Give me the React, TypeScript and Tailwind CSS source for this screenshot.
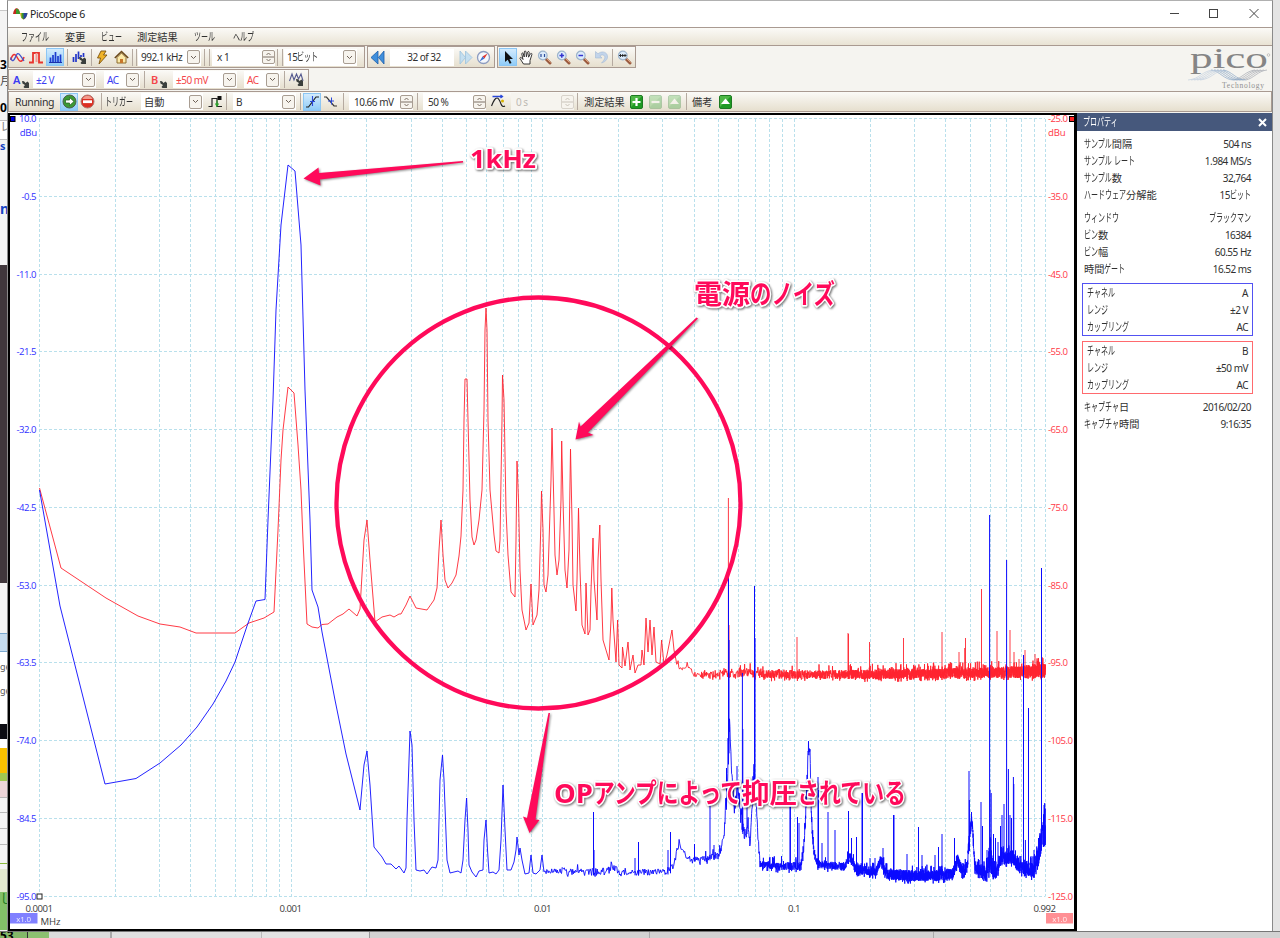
import type { ReactNode } from 'react';
import clsx from 'clsx';

const RUNS = /([\u3040-\u30ff]+|[\u0020-\u00ff]+)/;
const KANA = /[\u3040-\u30ff]/;
const LATIN = /[\u0020-\u00ff]/;

// UI text: kana runs are set condensed, latin runs a little tighter
function Jp({ children }: { children: string }) {
  return (
    <span className="whitespace-pre">
      {children.split(RUNS).filter(Boolean).map((run, i) => {
        if (KANA.test(run)) {
          return (
            <span
              key={i}
              className="inline-block origin-left scale-x-[0.61] text-[11.500px]"
              style={{ marginRight: `${-0.39 * run.length}em` }}
            >
              {run}
            </span>
          );
        }
        return (
          <span key={i} className={LATIN.test(run) ? 'text-[10px] tracking-[-0.5px]' : ''}>
            {run}
          </span>
        );
      })}
    </span>
  );
}

/* ---------- toolbar parts ---------- */

function Sep({ className }: { className?: string }) {
  return <div className={clsx('h-[17px] w-px shrink-0 bg-[#b5aaa0]', className)} />;
}

function Chevron() {
  return (
    <div className="mr-px flex h-[14px] w-[13px] shrink-0 items-center justify-center rounded-[2px] border border-[#a89d92] bg-[#f7f4ee]">
      <svg width="7" height="5" viewBox="0 0 7 5" fill="none" stroke="#6e6259">
        <path d="M1 1l2.5 2.5L6 1" />
      </svg>
    </div>
  );
}

function Select({ className, children }: { className?: string; children: string }) {
  return (
    <div className={clsx('flex h-[17px] shrink-0 items-center justify-between bg-white pl-[3px]', className)}>
      <Jp>{children}</Jp>
      <Chevron />
    </div>
  );
}

function Spin({ className, off, children }: { className?: string; off?: boolean; children: string }) {
  return (
    <div
      className={clsx(
        'flex h-[17px] shrink-0 items-center justify-between pl-[5px]',
        off ? 'bg-[#f6f4ef] text-[#bdb9b3]' : 'bg-white',
        className,
      )}
    >
      <Jp>{children}</Jp>
      <div
        className={clsx(
          'flex h-[14px] w-[13px] shrink-0 items-center justify-center rounded-[2px] border bg-[#f7f4ee]',
          off ? 'border-[#d8d3cb]' : 'border-[#a89d92]',
        )}
      >
        <svg width="11" height="12" viewBox="0 0 11 12" fill="none" stroke={off ? '#c9c3ba' : '#7d7167'}>
          <path d="M3.5 4l2-2 2 2M0 6h11M3.5 8l2 2 2-2" />
        </svg>
      </div>
    </div>
  );
}

function Ico({ className, children }: { className?: string; children: ReactNode }) {
  return (
    <svg className={clsx('shrink-0', className)} width="15" height="15" viewBox="0 0 15 15" fill="none">
      {children}
    </svg>
  );
}

function Active({ className, children }: { className?: string; children: ReactNode }) {
  return (
    <div
      className={clsx(
        'flex h-[18px] w-[18px] shrink-0 items-center justify-center border border-[#8cc6f4] bg-linear-to-b from-[#d3ebfd] to-[#8fccf8]',
        className,
      )}
    >
      {children}
    </div>
  );
}

const Wrench = () => (
  <path d="M7 7l2 .2L10.5 9l2-1.5L14 9v5H9.500l-1-1 1.500-2L7.500 9.500z" fill="#3b3f3c" />
);

function Magnifier({ className, mark }: { className?: string; mark: ReactNode }) {
  return (
    <Ico className={className}>
      <path d="M9 9l4 4" stroke="#9a5a3e" strokeWidth="3" strokeLinecap="round" />
      <path d="M9.500 8.500l4 4" stroke="#e0a27c" strokeWidth="1" />
      <circle cx="5.800" cy="5.500" r="4.300" fill="#dcebfa" stroke="#9db4cc" strokeWidth="1.200" />
      {mark}
    </Ico>
  );
}

function GreenButton({ className, off, kind }: { className?: string; off?: boolean; kind: 'plus' | 'minus' | 'up' }) {
  return (
    <svg className={clsx('shrink-0', off && 'opacity-30', className)} width="13" height="14" viewBox="0 0 13 14">
      <rect x="0.500" y="0.500" width="12" height="13" rx="1.500" fill="#1f9a24" stroke="#1d7a22" />
      <path d="M1 1h11L1 12z" fill="#6ccb5c" opacity="0.600" />
      {kind === 'plus' && <path d="M6.500 3v8M2.500 7h8" stroke="#fff" strokeWidth="2.200" />}
      {kind === 'minus' && <path d="M2.500 7h8" stroke="#fff" strokeWidth="2.200" />}
      {kind === 'up' && <path d="M6.500 3.500l4.500 5.500H2z" fill="#fff" />}
    </svg>
  );
}

const BAR = 'flex items-center border border-[#a99a91] bg-linear-to-b from-[#fbfaf7] to-[#e6dfce]';

function ViewToolbar() {
  return (
    <div className="flex h-[22px] gap-[2px]">
      <div className={clsx(BAR, 'w-[357px]')}>
        <Ico className="ml-[1px]">
          <path d="M0.500 10C3 3 5 3 7.500 8s5 4 6.500-1" stroke="#e33" strokeWidth="1.500" />
          <path d="M0.500 7.500C3 14 4.500 9 6.500 5s4 1 7.500 6" stroke="#45c" strokeWidth="1.300" />
        </Ico>
        <Ico className="ml-[4px]">
          <path d="M0 12.500h4V3h6v9.500h4" stroke="#e8352e" strokeWidth="1.800" />
          <path d="M7.500 3v9" stroke="#f29b96" strokeWidth="2" />
        </Ico>
        <Active className="ml-[2px]">
          <Ico>
            <path d="M1 12.500h13" stroke="#1b2fa8" />
            <path d="M2.500 12V7.500M5 12V5M7.500 12V2M10 12V6M12.500 12V4.500" stroke="#1d3ccf" strokeWidth="1.700" />
          </Ico>
        </Active>
        <Sep className="ml-[3px]" />
        <Ico className="ml-[4px]">
          <path d="M1.500 12V7M4 12V4M6.500 9V1.500M9 7V5M11.500 7V3" stroke="#2336c8" strokeWidth="1.700" />
          <Wrench />
        </Ico>
        <Sep className="ml-[4px]" />
        <Ico className="ml-[3px]">
          <path d="M6 1h5L8.500 5H12L4 14l1.500-6H2.500z" fill="#f0b429" stroke="#7c5210" strokeWidth="0.900" />
        </Ico>
        <Ico className="ml-[4px]">
          <path d="M3 7.500V13h9V7.500L7.500 3z" fill="#fbe9a8" stroke="#8b6a2c" />
          <path d="M0.800 8L7.500 1.500 14.200 8" stroke="#6c4a1b" strokeWidth="1.600" />
          <path d="M6 13V9h3v4" fill="#c8762b" />
        </Ico>
        <Sep className="ml-[3px]" />
        <Sep className="ml-[3px]" />
        <Select className="ml-[1px] w-[63px]">992.1 kHz</Select>
        <Sep className="ml-[3px]" />
        <Sep className="ml-[4px]" />
        <Spin className="ml-[2px] w-[63px]">x 1</Spin>
        <Sep className="ml-[2px]" />
        <Sep className="ml-[4px]" />
        <Select className="ml-[1px] w-[73px]">15ビット</Select>
      </div>

      <div className={clsx(BAR, 'w-[128px]')}>
        <Ico className="ml-[2px]">
          <path d="M8 1v13L1 7.500zM14 1v13L8.500 7.500z" fill="#3f8fdc" stroke="#1c5ea8" strokeWidth="0.800" />
        </Ico>
        <div className="ml-[5px] flex h-[17px] w-[64px] items-center justify-center bg-white pl-1">
          <Jp>32 of 32</Jp>
        </div>
        <Ico className="ml-[4px]">
          <path d="M2 1v13l5.500-6.500zM7.500 1v13L14 7.500z" fill="#c5dff0" stroke="#9cc2dc" strokeWidth="0.800" />
        </Ico>
        <Ico className="ml-[3px]">
          <circle cx="7.500" cy="7.500" r="6" fill="#f4f7fc" stroke="#8d9cc0" strokeWidth="1.300" />
          <path d="M11.500 3.500L8.500 8.500 6.500 6.500z" fill="#e0342b" />
          <path d="M3.500 11.500l3-5 2 2z" fill="#3b6fd0" />
        </Ico>
      </div>

      <div className={clsx(BAR, 'w-[139px]')}>
        <Active className="ml-px">
          <Ico>
            <path d="M4 1l8 8H8.500l2 4-1.800.8-2-4L4 12z" fill="#111" />
          </Ico>
        </Active>
        <Ico className="ml-[2px]">
          <path
            d="M4.500 14L1 8.500c-.5-1 1-1.500 1.800-.5L4 9.500 2.800 4c-.2-1.200 1.200-1.500 1.500-.3L5.200 7 5.300 2c0-1.300 1.600-1.300 1.700 0l.4 4.800L8.600 2.200c.3-1.200 1.800-.8 1.600.4L9.500 7.200l1.900-3.400c.6-1 1.900-.3 1.500.7L11 10.500V14z"
            fill="#fff"
            stroke="#222"
            strokeWidth="0.900"
          />
        </Ico>
        <Magnifier className="ml-[3px]" mark={<path d="M4 4v3M7.500 4v3" stroke="#2b4c9c" strokeWidth="1.200" />} />
        <Magnifier className="ml-[4px]" mark={<path d="M3.500 5.500h4.600M5.800 3.200v4.600" stroke="#3434d0" strokeWidth="1.500" />} />
        <Magnifier className="ml-[4px]" mark={<path d="M3.500 5.500h4.600" stroke="#3434d0" strokeWidth="1.500" />} />
        <Ico className="ml-[4px]">
          <path d="M1.500 1.500V8H8L5.800 5.800C9 3.500 12 6 10.500 9c-.6 1.500-1.500 2.500-3 4 5-1.500 7-5 5.500-8.500C11.500 1.500 7 1 4 3.800z" fill="#c2d4ea" stroke="#a3b8d4" strokeWidth="0.600" />
        </Ico>
        <Sep className="ml-[3px]" />
        <Magnifier
          className="ml-[4px]"
          mark={<path d="M2 5.500h7.500M3.500 4v3M5.700 4v3M8 4v3" stroke="#222" strokeWidth="0.900" />}
        />
      </div>
    </div>
  );
}

function ChannelToolbar() {
  return (
    <div className={clsx(BAR, 'mt-px h-[21px] w-[301px] text-[#3c3cf2]')}>
      <span className="ml-[4px] w-[8px] text-[11px] font-semibold">A</span>
      <Ico className="-ml-[6px] mt-[3px]">
        <Wrench />
      </Ico>
      <Select className="ml-[3px] w-[63px]">±2 V</Select>
      <Select className="ml-[8px] w-[36px]">AC</Select>
      <Sep className="ml-[4px]" />
      <span className="ml-[6px] w-[8px] text-[11px] font-semibold text-[#f4464a]">B</span>
      <Ico className="-ml-[6px] mt-[3px]">
        <Wrench />
      </Ico>
      <Select className="ml-[5px] w-[64px] text-[#f4464a]">±50 mV</Select>
      <Select className="ml-[7px] w-[36px] text-[#f4464a]">AC</Select>
      <Sep className="ml-[4px]" />
      <Ico className="ml-[4px]">
        <path d="M0.500 9L3 2l2 6 2.500-6 2 5L12 2l2 7" stroke="#555a90" strokeWidth="1.100" />
        <Wrench />
      </Ico>
    </div>
  );
}

function TriggerToolbar() {
  return (
    <div className={clsx(BAR, 'h-[21px] w-full')}>
      <span className="ml-[6px] w-[44px] text-[10.500px] tracking-[-0.35px]">Running</span>
      <Active className="ml-[1px]">
        <Ico>
          <circle cx="7.500" cy="7.500" r="6.500" fill="#3c9a35" stroke="#4b5e4a" />
          <path d="M3.500 6h4V3.500l4.500 4-4.500 4V9h-4z" fill="#fff" stroke="#205b1d" strokeWidth="0.700" />
        </Ico>
      </Active>
      <Ico className="ml-[2px]">
        <circle cx="7.500" cy="7.500" r="6.500" fill="#dc2f22" stroke="#b0766f" />
        <path d="M2.500 5a5.500 5.500 0 0 1 10 0z" fill="#f39a8c" />
        <path d="M3 7.700h9" stroke="#fff" strokeWidth="2.800" />
      </Ico>
      <Sep className="ml-[6px]" />
      <span className="ml-[3px] w-[33px]">
        <Jp>トリガー</Jp>
      </span>
      <Select className="ml-[3px] w-[62px]">自動</Select>
      <Ico className="ml-[5px]">
        <path d="M0.500 12.500H4V4.500h5v8h5" stroke="#222" strokeWidth="1.200" />
        <path d="M9.500 2h4v4h-4z" fill="#111" />
        <path d="M9 6.500v5M7.500 9.500L9 12l1.500-2.500" stroke="#2aa52a" strokeWidth="1.200" />
      </Ico>
      <Sep className="ml-[3px]" />
      <Select className="ml-[6px] w-[63px]">B</Select>
      <Sep className="ml-[4px]" />
      <Active className="ml-[2px]">
        <Ico>
          <path d="M1 13h2.500L11 3h3" stroke="#222" strokeWidth="1.200" />
          <path d="M7.500 2v10M5 7.500h5" stroke="#2a48d8" strokeWidth="1.100" />
        </Ico>
      </Active>
      <Ico className="ml-[2px]">
        <path d="M1 3h2.500L11 12h3" stroke="#333" strokeWidth="1.200" />
        <path d="M8.500 3.500v7M5 7h6" stroke="#2a48d8" strokeWidth="1" />
      </Ico>
      <Sep className="ml-[5px]" />
      <Spin className="ml-[5px] w-[64px]">10.66 mV</Spin>
      <Sep className="ml-[4px]" />
      <Spin className="ml-[5px] w-[63px]">50 %</Spin>
      <Ico className="ml-[5px]">
        <path d="M0.500 12C3 6 4 4 6 4s3 3.500 4 6 2 3 4 2" stroke="#222" strokeWidth="1.200" />
        <path d="M1.500 2.500h10M9.500 1l2 1.500-2 1.500" stroke="#2a48d8" strokeWidth="1.300" />
        <circle cx="11.500" cy="7" r="1.500" fill="#d8b400" />
      </Ico>
      <Spin off className="ml-[5px] w-[63px]">0 s</Spin>
      <Sep className="ml-[3px]" />
      <span className="ml-[6px] w-[42px]">測定結果</span>
      <GreenButton className="ml-[4px]" kind="plus" />
      <GreenButton className="ml-[6px]" kind="minus" off />
      <GreenButton className="ml-[6px]" kind="up" off />
      <Sep className="ml-[5px]" />
      <span className="ml-[5px] w-[22px]">備考</span>
      <GreenButton className="ml-[5px]" kind="up" />
    </div>
  );
}

function PicoLogo() {
  return (
    <svg width="86" height="45" viewBox="0 0 86 45">
      <g fill="none" strokeWidth="0.700">
        {[0, 3, 6, 9, 12].map((d) => (
          <g key={d}>
            <path d={`M${2 + d} 34C${14 + d} 33 ${16 + d} 25 ${27 + d} 24`} stroke="#c3d0e0" />
            <path d={`M${25 + d} 24C${34 + d} 25 ${38 + d} 34 ${48 + d} 34`} stroke="#8aa6c6" />
            <path d={`M${48 + d} 34C${56 + d} 32 ${60 + d} 25 ${69 + d} 24`} stroke="#a3a8b0" />
          </g>
        ))}
      </g>
      <text x="4" y="22" fontFamily="'Liberation Serif', serif" fontSize="29" textLength="78" lengthAdjust="spacingAndGlyphs" fill="#858585">
        pico
      </text>
      <circle cx="82.500" cy="9" r="1.300" fill="none" stroke="#999" strokeWidth="0.500" />
      <text x="36" y="41.500" fontFamily="'Liberation Serif', serif" fontSize="7.500" textLength="42" fill="#8f8f8f">
        Technology
      </text>
    </svg>
  );
}

/* ---------- spectrum chart ---------- */

const X0 = 39.5;
const DECADE = 251.6;
const Y0 = 119;
const STEP = 77.75;

type Pt = [number, number];

const RED: Pt[] = [
  [39.5, 488], [50, 527], [61, 568], [106, 598], [138, 616], [160, 624], [180, 627], [196, 633], [235, 633], [249, 623],
  [264, 618], [274, 612], [278, 530], [281, 460], [283, 430], [288, 387], [294, 393], [298, 445], [301, 490], [303, 540],
  [307, 624], [312, 627], [318, 628], [322, 624.5], [328, 624], [337, 617], [343, 614], [349, 609], [357, 616], [360, 609],
  [364, 540], [367, 520], [370, 560], [375, 622], [382, 617], [390, 615], [394, 617], [399, 614], [401, 614], [406, 605],
  [410, 596], [416, 608], [427, 610], [434, 600], [437, 588], [439, 550], [441, 520], [443, 555], [445, 580], [448, 588],
  [452, 583], [456, 575], [459, 556], [461, 536], [463, 490], [464, 420], [465, 379], [467, 379], [468, 420], [470, 500],
  [472, 537], [474, 545], [476, 540], [479, 520], [482, 490], [484, 410], [485, 330], [486, 308], [487, 330], [488, 420],
  [490, 490], [494, 535], [496, 551], [499, 553], [500, 540], [502, 420], [502.5, 375], [504, 400], [506, 510], [508, 555],
  [511, 592], [515, 597], [516, 540], [517, 461], [518.5, 500], [520, 570], [522, 610], [526, 630], [529, 623], [531, 584],
  [533, 625], [537, 615], [539, 590], [541, 520], [541.5, 491], [543, 530], [544, 585], [546, 592], [548, 575], [551, 480],
  [552, 428], [553.5, 490], [555, 555], [557, 575], [559, 560], [561, 500], [561.7, 441], [563, 500], [565, 570], [567, 588],
  [569, 550], [570.5, 449], [572, 520], [573, 585], [576, 611], [577, 580], [578.5, 508], [580, 570], [582, 625], [585, 634],
  [586, 583], [588, 635], [590, 630], [591, 590], [593, 538], [594, 580], [597, 620], [598, 560], [599.8, 525], [601, 580],
  [603, 640], [606, 650], [609, 660], [611, 620], [611.8, 588], [613, 620], [616, 662], [617.6, 620], [619, 665], [622, 668],
  [622.5, 647], [625, 666], [628, 642], [630, 670], [633, 655], [635, 673], [638, 665], [641, 665], [642, 650], [644, 665],
  [646, 618], [648, 652], [650, 620], [652, 655], [654, 627], [656, 662], [660, 664], [661.6, 640], [664, 665], [667, 655],
  [670, 640], [672, 630], [674, 650], [676, 660],
];

const BLUE: Pt[] = [
  [39.5, 490], [60, 606], [105, 784], [136, 778.5], [160, 763], [181, 745], [197, 727], [213, 704], [226, 681], [235, 662],
  [247, 626], [256, 601], [265, 599.5], [268, 520], [273, 400], [276, 310], [281, 225], [288, 165], [295, 171], [301, 245],
  [305, 390], [310, 520], [312, 590], [318, 607], [322, 632], [335, 700], [346, 754], [360, 810], [364, 765], [367, 751],
  [370, 785], [374, 847], [382, 857], [386, 864], [391, 864], [396, 869], [399, 866], [404, 873], [406, 868], [407, 820],
  [410, 731], [412, 745], [414, 820], [416, 870], [420, 871], [424, 870], [427, 874], [432, 867], [436, 868], [438, 860],
  [440, 780], [442.5, 755], [444, 780], [447, 860], [450, 873], [454, 872], [458, 871], [461, 873], [463, 860], [465, 820],
  [466.6, 798], [468, 830], [469, 865], [472, 872], [476, 877], [479, 871], [483, 870], [484, 840], [486, 820], [487.5, 850],
  [489, 873], [493, 872], [496, 874], [499, 870], [501, 840], [503, 785], [505, 830], [507, 870], [511, 870], [514, 862],
  [516, 850], [517, 837], [519, 855], [520, 848], [522, 860], [525, 874], [529, 873], [531, 855], [533, 873], [536, 874],
  [540, 870], [542, 855], [544, 872],
];

// noise floor envelopes: [x, top, bottom]
type Env = [number, number, number];

const RED_BAND: Env[] = [
  [676, 659, 663], [679, 666, 670], [690, 665, 670], [695, 672, 678], [710, 671, 678], [725, 669, 677], [735, 671, 679],
  [746, 668, 676], [755, 670, 678], [800, 670, 679], [850, 670, 679], [900, 669, 679], [950, 668, 678], [1000, 667, 678],
  [1015, 666, 678], [1030, 665, 678], [1045.5, 662, 678],
];

const BLUE_BAND: Env[] = [
  [544, 869, 875], [562, 867, 875], [580, 869, 876], [600, 868, 875], [613, 864, 871], [622, 869, 875], [665, 869, 876],
  [673, 863, 872], [677, 848, 854], [680, 843, 846], [684, 850, 856], [688, 856, 861], [700, 856, 862], [712, 854, 860],
  [720, 849, 857], [724, 832, 842], [727, 780, 800], [728.5, 700, 760], [730, 725, 740], [732, 770, 790], [734, 800, 812],
  [738, 785, 800], [741, 800, 825], [744, 825, 840], [748, 815, 832], [750, 838, 848], [752, 800, 812], [754, 762, 775],
  [756, 790, 805], [758, 830, 842], [760, 861, 868], [780, 862, 870], [801, 862, 870], [804, 838, 850], [807, 780, 800],
  [808, 747, 755], [810, 747, 755], [811.5, 810, 830], [814, 848, 858], [818, 860, 868], [845, 862, 871], [850, 852, 861],
  [856, 864, 874], [876, 868, 876], [881, 856, 864], [886, 869, 879], [905, 870, 881], [935, 870, 881], [953, 868, 879],
  [958, 854, 866], [963, 868, 879], [967, 860, 874], [970, 825, 840], [972, 813, 822], [975, 864, 874], [979, 862, 876],
  [984, 866, 881], [988, 862, 882], [990, 830, 870], [993, 866, 879], [997, 866, 878], [1001, 852, 864], [1013, 850, 864],
  [1018, 862, 872], [1034, 862, 878], [1038, 845, 867], [1041, 825, 852], [1043, 815, 847], [1045.5, 803, 846],
];

const RED_SPIKES: Pt[] = [
  [728.4, 498], [729, 625], [797, 637], [848, 633], [848.5, 634], [869.5, 642], [903.5, 638], [942, 632], [959, 652],
  [965.5, 638], [964.7, 648], [981.5, 589], [997, 631], [1010, 630], [1014, 652], [1025, 650], [1035, 654], [1019, 659],
];

const BLUE_SPIKES: Pt[] = [
  [593.5, 812], [594, 850], [638.5, 842], [635, 858], [670.5, 832], [668, 850], [694.5, 844], [710, 803], [714, 845],
  [726.5, 768], [728.5, 577], [729, 640], [737, 766], [742.4, 673], [742.8, 729], [747, 800], [754.5, 586], [755, 638],
  [790, 800], [790.4, 800], [797.5, 817], [799, 823], [770, 857], [818, 777], [818.5, 790], [822, 843], [828, 812],
  [835, 830], [848.5, 811], [851.5, 838], [856.5, 837], [862, 793], [862.5, 793], [870, 858], [875, 858], [883, 848],
  [893.5, 815], [894, 815], [907, 854], [918.5, 827], [922, 855], [935, 855], [938.5, 847], [942, 834], [954.5, 838],
  [969, 771], [969.4, 800], [971.5, 812], [981, 802], [982.5, 826], [987, 850], [989.6, 515], [990, 790], [991.2, 793],
  [993.5, 834], [995.5, 838], [998, 842], [1000.5, 826], [1002, 815], [1004, 804], [1006.6, 560], [1008.4, 769],
  [1010, 815], [1011.5, 818], [1013.4, 777], [1013.8, 784], [1017, 856], [1021, 856], [1023.5, 655], [1025.4, 840],
  [1028.5, 708], [1031, 856], [1034, 850], [1041.5, 568], [1044, 805],
];

function rng(seed: number) {
  let s = seed;
  return () => {
    s = (s * 1664525 + 1013904223) % 4294967296;
    return s / 4294967296;
  };
}

function limits(env: Env[], x: number): Pt {
  let i = 0;
  while (i < env.length - 2 && env[i + 1][0] < x) i++;
  const [xa, ta, ba] = env[i];
  const [xb, tb, bb] = env[i + 1];
  const k = (x - xa) / (xb - xa);
  return [ta + (tb - ta) * k, ba + (bb - ba) * k];
}

function bandPoints(env: Env[], seed: number): Pt[] {
  const rand = rng(seed);
  const out: Pt[] = [];
  const end = env[env.length - 1][0];
  let x = env[0][0];
  while (x < end) {
    const [top, bottom] = limits(env, x);
    let y = top + (bottom - top) * rand();
    if (rand() > 0.96) y = top - rand() * 6;
    else if (rand() > 0.96) y = bottom + rand() * 3;
    out.push([x, y]);
    // bins get denser towards the right of a log axis
    x += x < 700 ? 0.7 : x < 760 ? 0.35 : x < 850 ? 0.18 : 0.1;
  }
  return out;
}

const toStr = (pts: Pt[]) => pts.map(([x, y]) => `${x.toFixed(1)},${y.toFixed(1)}`).join(' ');

const redLine = toStr(RED);
const blueLine = toStr(BLUE);
const redBand = toStr(bandPoints(RED_BAND, 7));
const blueBand = toStr(bandPoints(BLUE_BAND, 21));
const spikes = (pts: Pt[], env: Env[]) => pts.map(([x, y]) => `M${x} ${y}V${limits(env, x)[1].toFixed(1)}`).join('');

const gridX = [0, 1, 2, 3]
  .flatMap((d) => [1, 2, 3, 4, 5, 6, 7, 8, 9].map((m) => X0 + DECADE * (d + Math.log10(m))))
  .concat(X0 + DECADE * (3 + Math.log10(9.92)));
const rows = Array.from({ length: 11 }, (_, i) => i);

const X_LABELS: [number, string][] = [
  [39, '0.0001'], [290.5, '0.001'], [542.5, '0.01'], [794, '0.1'], [1044.5, '0.992'],
];

function Chart() {
  return (
    <svg
      width="1064"
      height="814"
      viewBox="10 115 1064 814"
      fill="none"
      fontFamily="'Open Sans', 'Noto Sans', sans-serif"
      fontSize="9.600"
      letterSpacing="-0.500"
    >
      <g stroke="#b9e0ec" strokeDasharray="3 2">
        {gridX.map((x) => (
          <path key={x} d={`M${Math.floor(x) + 0.5} 119V896.5`} />
        ))}
        {rows.map((r) => (
          <path key={r} d={`M39 ${Math.floor(Y0 + r * STEP - 0.5) + 0.5}H1045`} />
        ))}
      </g>

      <g fill="#3030ff" textAnchor="end">
        {rows.map((r) => (
          <text key={r} x="36" y={122 + r * STEP}>{(10 - r * 10.5).toFixed(1)}</text>
        ))}
        <text x="37" y="136" letterSpacing="-0.200">dBu</text>
      </g>
      <g fill="#ff3846">
        {rows.map((r) => (
          <text key={r} x="1048" y={122 + r * STEP}>{(-25 - r * 10).toFixed(1)}</text>
        ))}
        <text x="1048" y="136" letterSpacing="-0.200">dBu</text>
      </g>
      <g fill="#3a3a3a" textAnchor="middle">
        {X_LABELS.map(([x, label]) => (
          <text key={label} x={x} y="912">{label}</text>
        ))}
        <text x="50.500" y="925" letterSpacing="-0.100">MHz</text>
      </g>

      <g stroke="#ff2430" strokeWidth="0.900">
        <polyline points={redLine} />
        <polyline points={redBand} />
        <path d={spikes(RED_SPIKES, RED_BAND)} />
      </g>
      <g stroke="#0a0aff" strokeWidth="0.900">
        <polyline points={blueLine} />
        <polyline points={blueBand} />
        <path d={spikes(BLUE_SPIKES, BLUE_BAND)} strokeWidth="1" />
      </g>

      <rect x="10.500" y="116.500" width="4.500" height="5" fill="#0000e8" stroke="#000" />
      <rect x="1069.500" y="116.500" width="5" height="5" fill="#f22" stroke="#000" />
      <rect x="37" y="894" width="5" height="5" fill="#fff" stroke="#222" />
      <rect x="10" y="913" width="27.500" height="10.500" fill="#8080ff" />
      <rect x="1046" y="913" width="27" height="10.500" fill="#ff8f94" />
      <g fill="#fff" fontSize="8" textAnchor="middle" letterSpacing="-0.200" opacity="0.850">
        <text x="23.500" y="921.500">x1.0</text>
        <text x="1059.500" y="921.500">x1.0</text>
      </g>

      {/* hand-placed notes */}
      <ellipse cx="538.500" cy="503" rx="202" ry="205.500" stroke="#ff0a5a" strokeWidth="4.300" />
      <g fill="#ff0a5a" className="drop-shadow-[1px_1.500px_1px_rgba(0,0,0,0.450)]">
        <path d="M463 161L319 173l-.5-5.500L303.500 178.500l17 7-.5-6L463 162.500z" />
        <path d="M696.500 317.500L580.500 426.500 579 421.500l-3.500 18 18-4.500-5.500-2.500L698 318.500z" />
        <path d="M548.500 713l-21.500 105-4-1.500 6.500 16.500 10-13-4-.5L550 713z" />
      </g>
      <g
        fill="#ff0a5a"
        stroke="#fff"
        strokeWidth="3.500"
        strokeLinejoin="round"
        paintOrder="stroke"
        fontFamily="'Open Sans', 'Noto Sans CJK JP', sans-serif"
        fontWeight="700"
        fontSize="27"
        letterSpacing="0"
        className="drop-shadow-[1px_1px_1px_rgba(0,0,0,0.600)]"
      >
        <text x="470" y="168" fontSize="25" textLength="66" lengthAdjust="spacingAndGlyphs">1kHz</text>
        <text x="694" y="304" textLength="56" lengthAdjust="spacingAndGlyphs">電源</text>
        <text x="750" y="304" textLength="85" lengthAdjust="spacingAndGlyphs">のノイズ</text>
        <text x="554" y="803" textLength="39" lengthAdjust="spacingAndGlyphs">OP</text>
        <text x="593" y="803" textLength="149" lengthAdjust="spacingAndGlyphs">アンプによって</text>
        <text x="742" y="803" textLength="55" lengthAdjust="spacingAndGlyphs">抑圧</text>
        <text x="797" y="803" textLength="109" lengthAdjust="spacingAndGlyphs">されている</text>
      </g>
    </svg>
  );
}

/* ---------- properties ---------- */

type RowData = [string, string];

const SAMPLING: RowData[] = [
  ['サンプル間隔', '504 ns'], ['サンプル レート', '1.984 MS/s'], ['サンプル数', '32,764'], ['ハードウェア分解能', '15ビット'],
];
const BINS: RowData[] = [
  ['ウィンドウ', 'ブラックマン'], ['ビン数', '16384'], ['ビン幅', '60.55 Hz'], ['時間ゲート', '16.52 ms'],
];
const CH_A: RowData[] = [['チャネル', 'A'], ['レンジ', '±2 V'], ['カップリング', 'AC']];
const CH_B: RowData[] = [['チャネル', 'B'], ['レンジ', '±50 mV'], ['カップリング', 'AC']];
const CAPTURE: RowData[] = [['キャプチャ日', '2016/02/20'], ['キャプチャ時間', '9:16:35']];

function Rows({ data }: { data: RowData[] }) {
  return (
    <>
      {data.map(([k, v]) => (
        <div key={k} className="flex h-[17px] items-center justify-between">
          <Jp>{k}</Jp>
          <Jp>{v}</Jp>
        </div>
      ))}
    </>
  );
}

function Properties() {
  return (
    <div className="flex w-[195px] flex-col bg-white">
      <div className="flex h-[18px] items-center justify-between bg-[#46587c] pl-[6px] pr-[5px] text-white">
        <Jp>プロパティ</Jp>
        <svg width="9" height="9" viewBox="0 0 9 9" stroke="#fff" strokeWidth="2">
          <path d="M1 1l7 7M8 1L1 8" />
        </svg>
      </div>
      <div className="pl-[7px] pr-[21px] pt-[4px]">
        <Rows data={SAMPLING} />
      </div>
      <div className="pl-[7px] pr-[21px] pt-[6px]">
        <Rows data={BINS} />
      </div>
      <div className="ml-[5px] mr-[19px] mt-[6px] h-[53px] border border-[#5252f2] pl-[4px] pr-[4px]">
        <Rows data={CH_A} />
      </div>
      <div className="ml-[5px] mr-[19px] mt-[5px] h-[53px] border border-[#ff6a6e] pl-[4px] pr-[4px]">
        <Rows data={CH_B} />
      </div>
      <div className="pl-[7px] pr-[21px] pt-[4px]">
        <Rows data={CAPTURE} />
      </div>
    </div>
  );
}

/* ---------- windows behind ---------- */

function LeftEdge() {
  return (
    <div className="flex w-[7px] shrink-0 flex-col overflow-hidden bg-[#f4f4f4] text-[12px] leading-none">
      <div className="h-[11px] border-b border-[#c8c8c8] bg-white" />
      <div className="h-[48px]" />
      <div className="h-[16px] font-bold text-black">3</div>
      <div className="h-[27px] text-[11px] text-[#444]">月</div>
      <div className="h-[18px] font-bold text-black">0</div>
      <div className="h-[20px] border-y border-[#c0c0c0] bg-white text-[#888]">レ</div>
      <div className="h-[62px] text-[11px] font-bold text-[#1746c4]">s</div>
      <div className="h-[63px] text-[14px] font-bold text-[#1746c4]">n</div>
      <div className="h-[318px] bg-[#40373c]" />
      <div className="h-[50px]" />
      <div className="h-[19px] border-y border-[#7aa8cf] bg-[#c6dcef]" />
      <div className="h-[72px] bg-white pt-[3px] text-[9px] leading-[24px] text-[#555]">ge<br />ge</div>
      <div className="h-[15px] bg-[#0c0c12]" />
      <div className="h-[9px] bg-white" />
      <div className="h-[25px] bg-[#f7c000]" />
      <div className="h-[8px] bg-[#a0c850]" />
      <div className="h-[16px] bg-[#ecd5d8]" />
      <div className="h-[16px] border-y border-[#b9b9b9]" />
      <div className="h-[16px] border-b border-[#b9b9b9]" />
      <div className="h-[16px] border-b border-[#b9b9b9]" />
      <div className="h-[19px] border-b border-[#8bbb3c]" />
      <div className="h-[5px]" />
      <div className="h-[23px] bg-[#e4ead0]" />
      <div className="h-[38px] bg-[#83c168] text-[13px] text-[#1f7a24]">し</div>
    </div>
  );
}

function BottomEdge() {
  return (
    <div className="flex h-[7px] w-full shrink-0 overflow-hidden border-t border-[#777] bg-[#d2d2d2]">
      <div className="w-[28px] border-r border-[#333] bg-[#83b868] text-[12px] font-bold leading-[7px] text-black">53</div>
      <div className="w-[21px] bg-[#8cc070]" />
      <div className="w-[63px] border-r-2 border-[#aaa] bg-[#dcdcdc]" />
      <div className="w-[150px] border-r border-[#bbb] bg-[#e0e0e0]" />
      <div className="w-[108px] border-r border-[#999] bg-[#e2e2e2]" />
      <div className="w-[280px] border-r border-[#aaa]" />
      <div className="w-[284px] border-r border-[#aaa]" />
    </div>
  );
}

const MENU: [string, string][] = [
  ['ファイル', 'w-[44px]'], ['変更', 'w-[36px]'], ['ビュー', 'w-[36px]'],
  ['測定結果', 'w-[57px]'], ['ツール', 'w-[39px]'], ['ヘルプ', 'w-[40px]'],
];

export default function App() {
  return (
    <div className="flex h-[938px] w-[1280px] flex-col overflow-hidden bg-[#e4e4e4] font-['Noto_Sans','Noto_Sans_CJK_JP',sans-serif] text-[10.200px] leading-[14px] text-[#303030]">
      <div className="flex h-[931px]">
        <LeftEdge />
        <div className="flex w-[1266px] flex-col border-l border-t border-r border-t-[#b0b0b0] border-l-[#8a8a8a] border-r-[#8a8a8a] bg-[#f5f4f0]">
          <div className="flex h-[26px] shrink-0 items-center bg-white">
            <svg className="ml-[5px]" width="15" height="14" viewBox="0 0 15 14">
              <path d="M0 7C1 0 6-1 7 7z" fill="#c3281c" />
              <path d="M3 7V1.800C5 1.500 6.500 3 7 7z" fill="#3a9a2c" />
              <path d="M7 6c1 9 6 8 7.500 0z" fill="#e0b41e" />
              <path d="M10 6v6.300C12 12.500 14 10 14.500 6z" fill="#28449c" />
              <path d="M8.500 6v5l2 1V6z" fill="#3a9a2c" />
            </svg>
            <span className="ml-[2px] text-[10.500px] tracking-[-0.350px] text-[#222]">PicoScope 6</span>
            <svg className="ml-auto mr-[13px]" width="90" height="12" viewBox="0 0 90 12" fill="none" stroke="#444">
              <path d="M1 5.500h9" />
              <rect x="40.500" y="1.500" width="8" height="8" />
              <path d="M80.500 1l9 9M89.500 1l-9 9" />
            </svg>
          </div>
          <div className="flex h-[19px] shrink-0 items-center border-y border-[#a99a91] bg-linear-to-b from-[#fbfaf7] to-[#e9e3d4] pl-[13px]">
            {MENU.map(([label, w]) => (
              <span key={label} className={w}>
                <Jp>{label}</Jp>
              </span>
            ))}
          </div>
          <div className="flex h-[45px] shrink-0 justify-between">
            <div>
              <ViewToolbar />
              <ChannelToolbar />
            </div>
            <PicoLogo />
          </div>
          <TriggerToolbar />
          <div className="mt-[1px] flex h-[818px] shrink-0">
            <div className="h-[818px] w-[1069px] shrink-0 border-y-2 border-l-2 border-r-[3px] border-black bg-white">
              <Chart />
            </div>
            <Properties />
          </div>
        </div>
      </div>
      <BottomEdge />
    </div>
  );
}
